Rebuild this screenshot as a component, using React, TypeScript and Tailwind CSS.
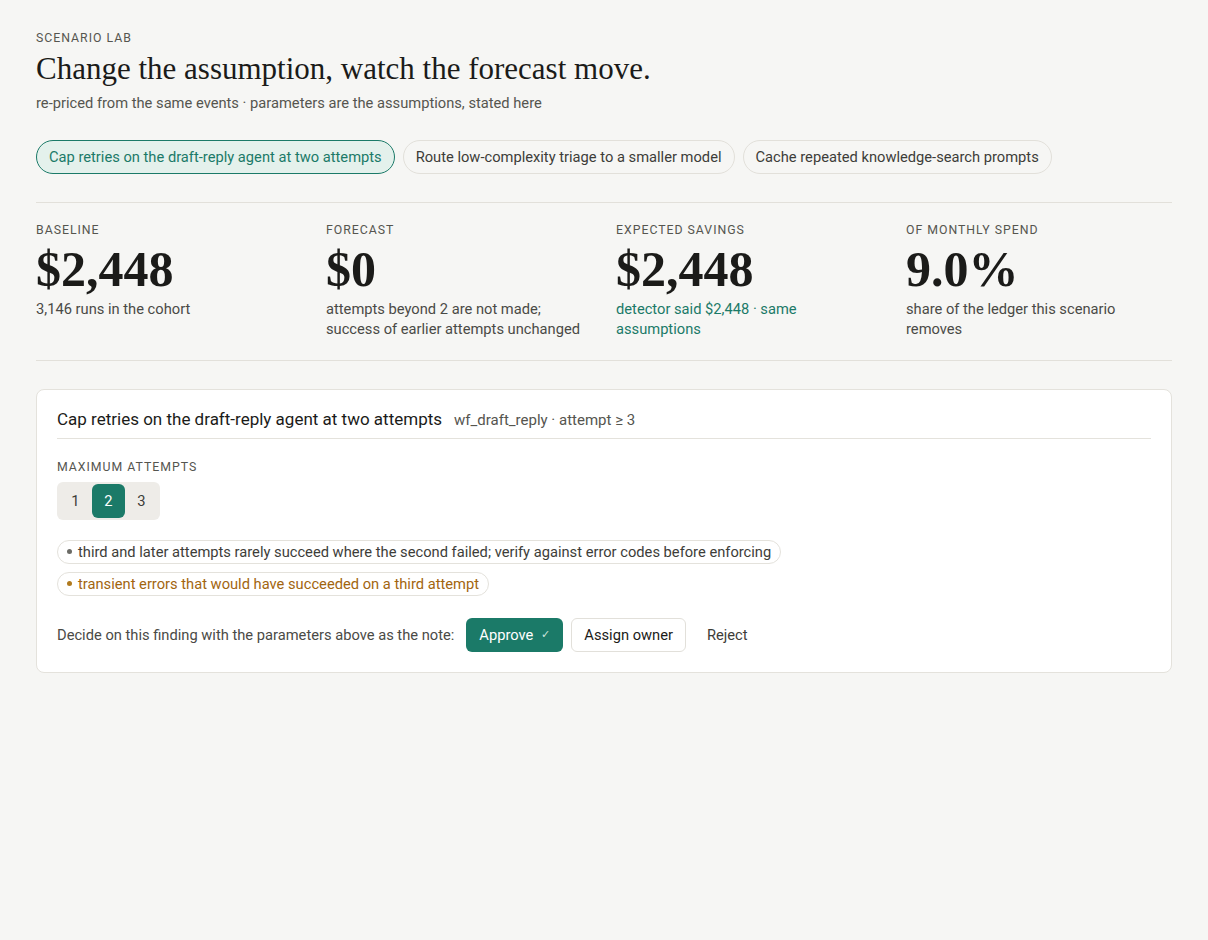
import { useState } from 'react'

const scenarios = [
  'Cap retries on the draft-reply agent at two attempts',
  'Route low-complexity triage to a smaller model',
  'Cache repeated knowledge-search prompts',
]

const stats = [
  { label: 'Baseline', value: '$2,448', note: '3,146 runs in the cohort', tone: 'text-[#4a4a46]' },
  {
    label: 'Forecast',
    value: '$0',
    note: 'attempts beyond 2 are not made; success of earlier attempts unchanged',
    tone: 'text-[#4a4a46]',
  },
  {
    label: 'Expected savings',
    value: '$2,448',
    note: 'detector said $2,448 · same assumptions',
    tone: 'text-[#1b7a68]',
  },
  {
    label: 'Of monthly spend',
    value: '9.0%',
    note: 'share of the ledger this scenario removes',
    tone: 'text-[#4a4a46]',
  },
]

export default function App() {
  const [active, setActive] = useState(0)
  const [attempts, setAttempts] = useState(2)

  return (
    <div className="min-h-screen bg-[#f6f6f4] text-[#1d1d1b] font-['Roboto','Liberation_Sans',sans-serif]">
      <div className="px-9 pt-[29px] pb-12">
        <p className="text-[12.3px] tracking-[0.08em] uppercase text-[#55554f]">Scenario lab</p>
        <h1 className="mt-[4px] text-[31px] leading-[36px] font-['Liberation_Serif',serif] text-[#1b1b19]">
          Change the assumption, watch the forecast move.
        </h1>
        <p className="mt-[5px] text-[14.7px] text-[#55554f]">
          re-priced from the same events · parameters are the assumptions, stated here
        </p>

        <div className="mt-[26px] flex gap-2">
          {scenarios.map((s, i) => (
            <button
              key={s}
              onClick={() => setActive(i)}
              className={
                i === active
                  ? 'h-[34px] px-3 rounded-full border border-[#1b7a68] bg-[#e4f1ec] text-[#1b7a68] text-[14.7px]'
                  : 'h-[34px] px-3 rounded-full border border-[#e2e0da] bg-[#f6f6f4] text-[#3d3d39] text-[14.7px]'
              }
            >
              {s}
            </button>
          ))}
        </div>

        <div className="mt-7 border-t border-[#e2e0da] border-b pt-[18px] pb-[21px] grid grid-cols-4 gap-6">
          {stats.map((s) => (
            <div key={s.label} className="max-w-[256px]">
              <p className="text-[12.3px] tracking-[0.08em] uppercase text-[#55554f]">{s.label}</p>
              <p className="mt-[1px] text-[50px] leading-[56px] font-semibold font-['Liberation_Serif',serif] text-[#1b1b19]">
                {s.value}
              </p>
              <p className={`mt-[2px] text-[14.7px] leading-[20px] ${s.tone}`}>{s.note}</p>
            </div>
          ))}
        </div>

        <div className="mt-7 bg-white border border-[#e4e2dc] rounded-lg px-5 pt-[17px] pb-5">
          <div className="flex items-baseline gap-3 pb-[6px] border-b border-[#e4e2dc]">
            <span className="text-[17px] text-[#1b1b19]">{scenarios[active]}</span>
            <span className="text-[15px] text-[#55554f]">wf_draft_reply · attempt ≥ 3</span>
          </div>

          <p className="mt-[19px] text-[12.3px] tracking-[0.08em] uppercase text-[#55554f]">Maximum attempts</p>
          <div className="mt-[5px] inline-flex p-[2px] rounded-md bg-[#eeece8]">
            {[1, 2, 3].map((n) => (
              <button
                key={n}
                onClick={() => setAttempts(n)}
                className={
                  n === attempts
                    ? 'w-[33px] h-[34px] rounded-md bg-[#1b7a68] text-white text-[14.7px]'
                    : 'w-[33px] h-[34px] rounded-md text-[#3d3d39] text-[14.7px]'
                }
              >
                {n}
              </button>
            ))}
          </div>

          <div className="mt-[20px] flex flex-col items-start gap-2">
            <span className="h-6 inline-flex items-center gap-[6px] px-[9px] rounded-full border border-[#e4e2dc] text-[14.7px] text-[#3d3d39]">
              <span className="w-[5px] h-[5px] rounded-full bg-[#6b6b66]" />
              third and later attempts rarely succeed where the second failed; verify against error codes before enforcing
            </span>
            <span className="h-6 inline-flex items-center gap-[6px] px-[9px] rounded-full border border-[#e4e2dc] text-[14.7px] text-[#a2650f]">
              <span className="w-[5px] h-[5px] rounded-full bg-[#b07a1e]" />
              transient errors that would have succeeded on a third attempt
            </span>
          </div>

          <div className="mt-[22px] flex items-center gap-2">
            <span className="text-[14.7px] text-[#4a4a46] mr-1">Decide on this finding with the parameters above as the note:</span>
            <button className="h-[34px] px-[13px] rounded-md bg-[#1b7a68] text-white text-[14.7px] inline-flex items-center gap-2">
              Approve <span className="text-[11px] text-[#cfe5de]">✓</span>
            </button>
            <button className="h-[34px] px-3 rounded-md bg-white border border-[#e2e0da] text-[14.7px] text-[#1b1b19]">
              Assign owner
            </button>
            <button className="h-[34px] px-[13px] text-[14.7px] text-[#3d3d39]">Reject</button>
          </div>
        </div>
      </div>
    </div>
  )
}
